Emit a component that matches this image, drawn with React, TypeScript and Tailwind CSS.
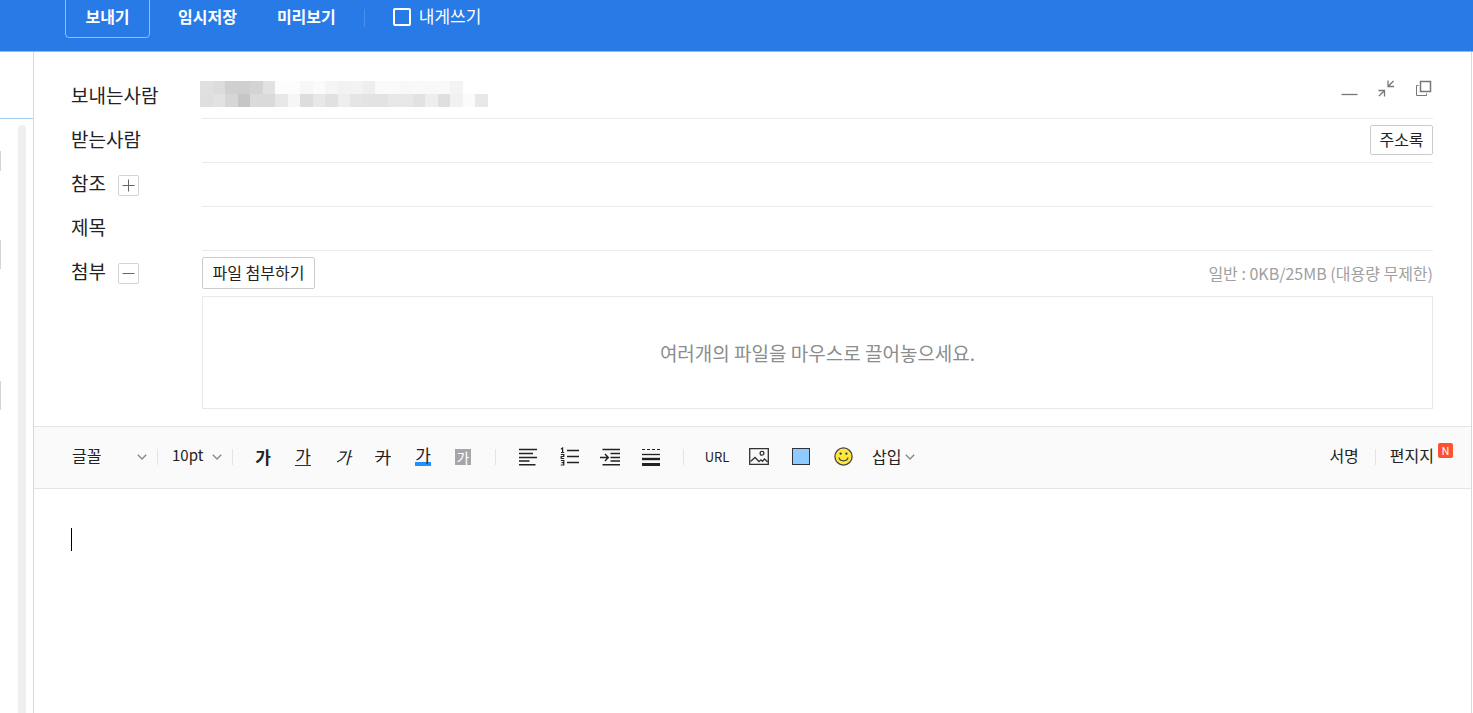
import type { ReactNode } from 'react';

const MOSAIC = [
  ['e0', 'dc', 'd0', 'cf', 'd3', 'e2', 'fc', 'fc', 'f7', 'fb', 'f5', 'f2', 'f3', 'ee', 'fa', 'fa', 'f8', 'f9', 'f8', 'f9', 'f3'],
  ['df', 'e2', 'd6', 'c6', 'da', 'da', 'e7', 'f6', 'dd', 'e8', 'e1', 'ee', 'e5', 'e3', 'e3', 'e8', 'e8', 'e2', 'ee', 'df', 'f1', 'fb', 'e8'],
];

function MaskedSender() {
  return (
    <svg width="288" height="26" viewBox="0 0 23 2" preserveAspectRatio="none" shapeRendering="crispEdges" aria-hidden="true">
      {MOSAIC.map((row, y) =>
        row.map((c, x) => <rect key={`${x}-${y}`} x={x} y={y} width="1" height="1" fill={`#${c}${c}${c}`} />),
      )}
    </svg>
  );
}

function Chevron() {
  return (
    <svg width="10" height="6" viewBox="0 0 10 6" fill="none" stroke="#8a8a8a" strokeWidth="1.4" aria-hidden="true">
      <path d="M0.8 0.7 5 4.9 9.2 0.7" />
    </svg>
  );
}

function Divider() {
  return <span className="h-4 w-px shrink-0 bg-[#e4e4e4]" />;
}

function Row({ label, htmlFor, action, children }: { label: string; htmlFor: string; action?: ReactNode; children: ReactNode }) {
  return (
    <div className="flex h-11 items-stretch">
      <div className="flex w-[131px] shrink-0 items-center gap-3 pb-1">
        <label htmlFor={htmlFor} className="text-[19px] leading-6">{label}</label>
        {action}
      </div>
      <div className="flex min-w-0 grow items-center border-b border-[#ebebeb]">{children}</div>
    </div>
  );
}

function Toggle({ label, open }: { label: string; open: boolean }) {
  return (
    <button type="button" aria-label={label} className="mt-1 flex size-[21px] items-center justify-center rounded-xs border border-[#d3d3d3]">
      <svg width="13" height="13" viewBox="0 0 13 13" stroke="#666" strokeWidth="1" aria-hidden="true">
        <path d={open ? 'M.5 6.5h12' : 'M.5 6.5h12M6.5 .5v12'} />
      </svg>
    </button>
  );
}

function Tool({ label, children }: { label: string; children: ReactNode }) {
  return (
    <button type="button" aria-label={label} className="flex h-8 w-10 shrink-0 items-center justify-center">
      {children}
    </button>
  );
}

function WideTool({ label, children }: { label: string; children: ReactNode }) {
  return (
    <button type="button" aria-label={label} className="flex h-8 w-[42px] shrink-0 items-center justify-center">
      {children}
    </button>
  );
}

function Header() {
  return (
    <header className="flex h-[52px] items-start overflow-hidden border-b border-[#8dbbf5] bg-[#287ae6] pl-[65px] text-white">
      <button type="button" className="-mt-1 h-[42px] w-[85px] rounded-sm border border-[#94bdf3] pb-0.5 text-[16px] leading-6 font-bold">
        보내기
      </button>
      <div className="flex h-8 items-center">
        <button type="button" className="ml-7 text-[16px] leading-6 font-bold">임시저장</button>
        <button type="button" className="ml-10 text-[16px] leading-6 font-bold">미리보기</button>
        <span className="mt-1 ml-7 h-[18px] w-px bg-[#4a90eb]" />
        <label className="ml-7 flex items-center gap-2 text-[17px] leading-6">
          <input type="checkbox" className="mt-0.5 size-[18px] appearance-none rounded-xs border-2 border-white" />
          내게쓰기
        </label>
      </div>
    </header>
  );
}

function Sidebar() {
  return (
    <aside className="flex w-[33px] shrink-0 flex-col">
      <div className="h-[67px] shrink-0 border-b border-[#a5cdf0]" />
      <div className="flex grow justify-between pr-[7px]">
        <div className="flex w-px flex-col pt-8">
          <span className="h-5 bg-[#d5d5d5]" />
          <span className="mt-[69px] h-[29px] bg-[#d5d5d5]" />
          <span className="mt-28 h-[29px] bg-[#d5d5d5]" />
        </div>
        <div className="mt-1.5 w-2 rounded-t-full bg-[#efefef]" />
      </div>
    </aside>
  );
}

function WindowButtons() {
  return (
    <div className="mr-px mb-4 ml-auto flex items-center gap-5 text-[#777]">
      <button type="button" aria-label="최소화">
        <svg width="17" height="17" viewBox="0 0 17 17" stroke="currentColor" strokeWidth="1.3" aria-hidden="true">
          <path d="M0.5 14.5h16" />
        </svg>
      </button>
      <button type="button" aria-label="축소">
        <svg width="17" height="17" viewBox="0 0 17 17" fill="none" stroke="currentColor" strokeWidth="1.3" aria-hidden="true">
          <path d="M15.500 1 10.200 6.300M10 .5v6h6M1 16l5.300-5.300M.5 10.500h6v6" />
        </svg>
      </button>
      <button type="button" aria-label="새 창">
        <svg width="17" height="17" viewBox="0 0 17 17" fill="none" stroke="currentColor" aria-hidden="true">
          <path d="M5.5 1.5h10v10h-10z" strokeWidth="1.5" />
          <path d="M3.5 5.500h-2v10h10v-2" />
        </svg>
      </button>
    </div>
  );
}

function ComposeForm() {
  return (
    <div className="pt-[23px] pr-[38px] pb-[17px] pl-[37px]">
      <Row label="보내는사람" htmlFor="from">
        <output id="from" aria-label="보내는사람" className="mb-1.5 -ml-0.5 block">
          <MaskedSender />
        </output>
        <WindowButtons />
      </Row>
      <Row label="받는사람" htmlFor="to">
        <input id="to" type="text" className="h-8 min-w-0 grow text-[16px] outline-none" />
        <button type="button" className="mb-0.5 h-[30px] w-[63px] shrink-0 rounded-xs border border-[#ccc] pb-0.5 text-[16px] leading-6">
          주소록
        </button>
      </Row>
      <Row label="참조" htmlFor="cc" action={<Toggle label="숨은참조 열기" open={false} />}>
        <input id="cc" type="text" className="h-8 min-w-0 grow text-[16px] outline-none" />
      </Row>
      <Row label="제목" htmlFor="subject">
        <input id="subject" type="text" className="h-8 min-w-0 grow text-[16px] outline-none" />
      </Row>
      <div className="flex">
        <div className="flex h-11 w-[131px] shrink-0 items-center gap-3 pb-1">
          <span className="text-[19px] leading-6">첨부</span>
          <Toggle label="첨부 닫기" open />
        </div>
        <div className="min-w-0 grow pt-1.5">
          <div className="flex items-center justify-between">
            <button type="button" className="h-8 w-[113px] rounded-xs border border-[#ccc] pb-0.5 text-[16px] leading-6">
              파일 첨부하기
            </button>
            <span className="text-[16px] leading-6 text-[#a0a0a0]">일반 : 0KB/25MB (대용량 무제한)</span>
          </div>
          <div className="mt-[7px] flex h-[113px] items-center justify-center border border-[#e9e9e9] text-[19px] leading-6 text-[#8c8c8c]">
            여러개의 파일을 마우스로 끌어놓으세요.
          </div>
        </div>
      </div>
    </div>
  );
}

function Toolbar() {
  return (
    <div className="flex h-[63px] items-center border-y border-[#e5e5e5] bg-[#fafafa] pr-[18px] pb-0.5 pl-[38px]">
      <div className="relative flex w-[75px] shrink-0 items-center">
        <select aria-label="글꼴" className="w-full appearance-none pb-1 text-[16px] leading-6 outline-none">
          <option>글꼴</option>
        </select>
        <span className="pointer-events-none absolute right-0">
          <Chevron />
        </span>
      </div>
      <span className="w-2.5 shrink-0" />
      <Divider />
      <div className="relative ml-3.5 flex w-[50px] shrink-0 items-center">
        <select aria-label="글자 크기" className="w-full appearance-none pb-1 text-[15px] leading-6 outline-none">
          <option>10pt</option>
        </select>
        <span className="pointer-events-none absolute right-0">
          <Chevron />
        </span>
      </div>
      <span className="w-2.5 shrink-0" />
      <Divider />

      <div className="ml-2.5 flex shrink-0 text-[17px] leading-5">
        <Tool label="굵게"><b className="font-bold">가</b></Tool>
        <Tool label="밑줄"><span className="h-[18px] border-b border-[#333] leading-4">가</span></Tool>
        <Tool label="기울임"><i className="italic">가</i></Tool>
        <Tool label="취소선"><s className="line-through">가</s></Tool>
        <Tool label="글자색"><span className="h-[18px] border-b-4 border-[#1e90ff] leading-[14px]">가</span></Tool>
        <Tool label="배경색"><span className="size-4 bg-[#a6a6aa] text-center text-[14px] leading-4 text-white">가</span></Tool>
      </div>
      <span className="w-3 shrink-0" />
      <Divider />

      <div className="ml-3 flex shrink-0 gap-px text-[#222]">
        <Tool label="정렬">
          <svg width="18" height="18" viewBox="0 0 18 18" stroke="currentColor" strokeWidth="1.4" aria-hidden="true">
            <path d="M0 1.5h18M0 5.5h14M0 9.5h18M0 13h10.500M0 16.800h16.500" />
          </svg>
        </Tool>
        <Tool label="번호 목록">
          <svg width="19" height="19" viewBox="0 0 19 19" fill="none" stroke="currentColor" aria-hidden="true">
            <path d="M7 3.500h12M7 9.500h12M7 15.500h12" strokeWidth="1.4" />
            <path d="M1 2.200 2.600 1v4.500M1 5.500h3.200M.8 7.500h3v2H1.200v2h3M.8 13.500h3v4.500h-3M1.500 15.700h2.300" strokeWidth="1.200" />
          </svg>
        </Tool>
        <Tool label="들여쓰기">
          <svg width="20" height="18" viewBox="0 0 20 18" fill="none" stroke="currentColor" strokeWidth="1.4" aria-hidden="true">
            <path d="M2.500 1.500H20M10.500 5.500H20M10.500 9.500H20M10.500 13H20M2.500 16.800H20M0 9.500h8M5 6l3.300 3.500L5 13" />
          </svg>
        </Tool>
        <Tool label="줄 간격">
          <svg width="18" height="18" viewBox="0 0 18 18" stroke="currentColor" aria-hidden="true">
            <path d="M0 1.500h18" strokeDasharray="3 2" />
            <path d="M0 6.500h18" strokeWidth="1.300" />
            <path d="M0 11h18" strokeWidth="2.400" />
            <path d="M0 16.500h18" strokeWidth="3" />
          </svg>
        </Tool>
      </div>
      <span className="w-3 shrink-0" />
      <Divider />

      <div className="ml-3 flex shrink-0">
        <WideTool label="URL"><span className="text-[13px] leading-6">URL</span></WideTool>
        <WideTool label="사진">
          <svg width="20" height="17" viewBox="0 0 20 17" fill="none" stroke="#333" strokeWidth="1.3" aria-hidden="true">
            <path d="M.7.700h18.600v15.600H.7z" />
            <circle cx="13" cy="5.300" r="1.900" />
            <path d="m1.500 13.500 4.500-4 4 4 2-1.700 1.500 1.500 2-2.300 3.200 3" />
          </svg>
        </WideTool>
        <WideTool label="배경"><span className="h-[17px] w-[18px] border border-[#333] bg-[#8fcbff]" /></WideTool>
        <WideTool label="이모티콘">
          <svg width="19" height="19" viewBox="0 0 19 19" fill="none" stroke="#444" strokeWidth="1.3" aria-hidden="true">
            <circle cx="9.500" cy="9.500" r="8.600" fill="#ffe83b" />
            <path d="M5 10.500c.8 4.400 8.200 4.400 9 0" />
            <circle cx="6.600" cy="6.700" r="1.100" fill="#333" stroke="none" />
            <circle cx="12.400" cy="6.700" r="1.100" fill="#333" stroke="none" />
          </svg>
        </WideTool>
      </div>
      <button type="button" className="ml-2 flex shrink-0 items-center gap-1 text-[16px] leading-6">
        <span className="pb-0.5">삽입</span>
        <Chevron />
      </button>

      <div className="ml-auto flex shrink-0 items-center text-[16px] leading-6">
        <button type="button" className="mr-4 pb-1">서명</button>
        <Divider />
        <button type="button" className="ml-3.5 flex items-start gap-1 pb-1">
          편지지
          <span className="flex size-[15px] items-center justify-center rounded-xs bg-[#ff5030] text-[11px] leading-none text-white">
            N
          </span>
        </button>
      </div>
    </div>
  );
}

export default function App() {
  return (
    <div className="flex min-h-screen flex-col bg-white font-['Noto_Sans_CJK_KR',sans-serif] text-[#222]">
      <Header />
      <div className="flex grow">
        <Sidebar />
        <main className="mr-px flex min-w-0 grow flex-col border-x border-[#d8d8d8]">
          <ComposeForm />
          <Toolbar />
          <div className="relative flex grow">
            <textarea aria-label="본문" className="grow resize-none px-[38px] py-9 text-[16px] leading-6 outline-none" />
            <span className="pointer-events-none absolute top-[39px] left-[37px] h-[23px] w-px bg-black" />
          </div>
        </main>
      </div>
    </div>
  );
}
